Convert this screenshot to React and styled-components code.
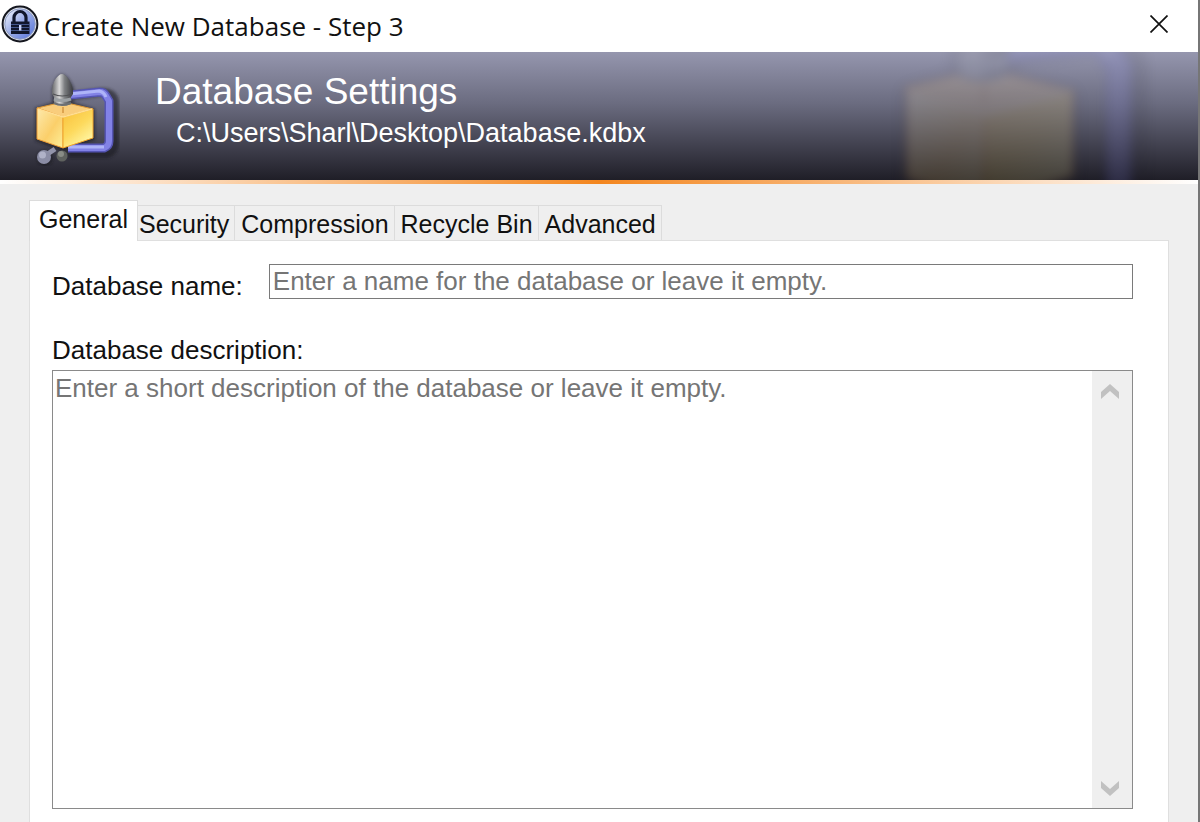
import React from "react";
import styled, { createGlobalStyle } from "styled-components";

const TABS = ["General", "Security", "Compression", "Recycle Bin", "Advanced"];

function LockIcon() {
  return (
    <svg width="38" height="38" viewBox="0 0 38 38" aria-hidden="true">
      <defs>
        <linearGradient id="lockFill" x1="0" y1="0" x2="1" y2="1">
          <stop offset="0.1" stopColor="#e4eafa" />
          <stop offset="0.45" stopColor="#9fb0e8" />
          <stop offset="0.9" stopColor="#5f7bdd" />
        </linearGradient>
      </defs>
      <circle cx="19" cy="19" r="17.4" fill="#dfe3ee" stroke="#15171f" strokeWidth="2" />
      <circle cx="19" cy="19" r="15.2" fill="url(#lockFill)" stroke="#8f9dc4" />
      <path d="M13 17v-4.500a6 6 0 0 1 12 0V17" fill="none" stroke="#10162c" strokeWidth="3.2" />
      <path d="M10 16.500h18.500v12.500H10z" fill="#10162c" />
      <path d="M10 19.500h18.500M10 22.500h18.500M10 25.500h18.500" stroke="#4a5d96" strokeWidth="0.9" />
      <path d="M18 20h2.400v5.500H18z" fill="#c5d0f5" />
    </svg>
  );
}

function ClampIcon() {
  return (
    <svg viewBox="0 0 90 96" width="100%" height="100%" aria-hidden="true">
      <defs>
        <linearGradient id="cubeLeft" x1="0" y1="0" x2="1" y2="1">
          <stop offset="0" stopColor="#fdeaae" />
          <stop offset="0.55" stopColor="#fbcf6a" />
          <stop offset="1" stopColor="#fdf09a" />
        </linearGradient>
        <linearGradient id="cubeRight" x1="0" y1="0" x2="0.6" y2="1">
          <stop offset="0" stopColor="#f8bf3a" />
          <stop offset="0.55" stopColor="#fdd95c" />
          <stop offset="1" stopColor="#fff6a4" />
        </linearGradient>
        <linearGradient id="metal" x1="0" y1="0" x2="1" y2="0">
          <stop offset="0" stopColor="#66676a" />
          <stop offset="0.35" stopColor="#d8d8d8" />
          <stop offset="0.6" stopColor="#7c7e81" />
          <stop offset="1" stopColor="#3b3c40" />
        </linearGradient>
        <filter id="shade" x="-20%" y="-20%" width="150%" height="150%">
          <feGaussianBlur stdDeviation="1.8" />
        </filter>
        <filter id="soft">
          <feGaussianBlur stdDeviation="0.7" />
        </filter>
      </defs>
      <g filter="url(#shade)" opacity="0.55">
        <path d="M42 26l30-4q11 0 13 9v44q-1 8-9 9H38" fill="none" stroke="#15151f" strokeWidth="8" />
        <path d="M5 38l28-9 32 10v31L34 82 5 71z" fill="#15151f" />
        <path d="M22 18q9-28 22 0v17H22z" fill="#15151f" />
        <circle cx="15" cy="88" r="8" fill="#15151f" />
      </g>
      <g filter="url(#soft)">
        <path d="M40 25l30-3q4 0 6 4l3 5v40q0 5-5 7H38" fill="none" stroke="#5555b4" strokeWidth="9" strokeLinejoin="round" />
        <path d="M40 25l30-3q4 0 6 4l3 5v40q0 5-5 7H38" fill="none" stroke="#8282e6" strokeWidth="6" strokeLinejoin="round" />
        <path d="M40 24l29-3q5 1 7 6M38 77h36" fill="none" stroke="#aeb4f8" strokeWidth="3" />
        <path d="M25 79l-9 6" stroke="#9294aa" strokeWidth="5" />
        <circle cx="14" cy="87" r="7" fill="#8b8da5" />
        <circle cx="12.5" cy="85" r="3.5" fill="#b0b2c8" />
        <circle cx="32" cy="86" r="5.5" fill="#5f625e" />
        <circle cx="31" cy="84" r="3" fill="#898c86" />
        <path d="M7 38l26-6 30 7-30 8z" fill="#f9cd7c" stroke="#dd9734" />
        <path d="M7 38l26 9v31L7 69z" fill="url(#cubeLeft)" stroke="#ee9c34" />
        <path d="M33 47l30-8v29L33 78z" fill="url(#cubeRight)" stroke="#efa52c" />
        <path d="M8 39l25 8 29-8" fill="none" stroke="#ffdf94" strokeWidth="1.5" />
        <path d="M33 37v6" stroke="#c27b25" />
        <path d="M22 20C22 12 28 4 32 4s10 8 11 16v4l-2 3v7q-9 4-17 0v-7l-2-3z" fill="url(#metal)" />
        <path d="M23 24q9 4 19 0" fill="none" stroke="#505154" strokeWidth="1.2" />
        <path d="M24 29q8 3 17 0" fill="none" stroke="#9ca1a5" strokeWidth="3" />
        <path d="M24 33q8 4 17 0" fill="none" stroke="#6c6f73" strokeWidth="2" />
      </g>
    </svg>
  );
}

function Arrow({ down }) {
  return (
    <svg width="18" height="15" viewBox="0 0 18 15" aria-hidden="true">
      <path
        d={down ? "M0 0l9 8 9-8v7l-9 8-9-8z" : "M0 15l9-8 9 8V8L9 0 0 8z"}
        fill="#c1c1c1"
      />
    </svg>
  );
}

function App() {
  const [tab, setTab] = React.useState("General");
  const [name, setName] = React.useState("");
  const [description, setDescription] = React.useState("");
  const descriptionRef = React.useRef(null);

  function scroll(amount) {
    descriptionRef.current.scrollBy({ top: amount });
  }

  return (
    <Window>
      <GlobalStyle />
      <TitleBar>
        <LockIcon />
        <Title>Create New Database - Step 3</Title>
        <CloseButton type="button" aria-label="Close">
          <svg width="18" height="18" viewBox="0 0 18 18" aria-hidden="true">
            <path d="M0.5 0.5l17 17M17.5 0.5l-17 17" stroke="#111" strokeWidth="1.7" />
          </svg>
        </CloseButton>
      </TitleBar>
      <Banner>
        <Watermark>
          <ClampIcon />
        </Watermark>
        <BannerIcon>
          <ClampIcon />
        </BannerIcon>
        <div>
          <Heading>Database Settings</Heading>
          <Path>C:\Users\Sharl\Desktop\Database.kdbx</Path>
        </div>
      </Banner>
      <AccentLine />
      <Content>
        <TabList role="tablist">
          {TABS.map(label => (
            <Tab
              key={label}
              type="button"
              role="tab"
              aria-selected={tab === label}
              $active={tab === label}
              onClick={() => setTab(label)}
            >
              {label}
            </Tab>
          ))}
        </TabList>
        <Panel role="tabpanel">
          <NameRow>
            <Label htmlFor="db-name">Database name:</Label>
            <NameInput
              id="db-name"
              type="text"
              value={name}
              onChange={e => setName(e.target.value)}
              placeholder="Enter a name for the database or leave it empty."
              autoComplete="off"
            />
          </NameRow>
          <Label htmlFor="db-description">Database description:</Label>
          <DescriptionBox>
            <Description
              id="db-description"
              ref={descriptionRef}
              value={description}
              onChange={e => setDescription(e.target.value)}
              placeholder="Enter a short description of the database or leave it empty."
            />
            <ScrollBar>
              <ScrollButton type="button" aria-label="Scroll up" onClick={() => scroll(-30)}>
                <Arrow />
              </ScrollButton>
              <ScrollButton type="button" aria-label="Scroll down" onClick={() => scroll(30)}>
                <Arrow down />
              </ScrollButton>
            </ScrollBar>
          </DescriptionBox>
        </Panel>
      </Content>
    </Window>
  );
}

const GlobalStyle = createGlobalStyle`
  * {
    box-sizing: border-box;
  }

  body {
    margin: 0;
    background: #efefef;
    font-family: "Liberation Sans", Arial, sans-serif;
  }

  button,
  input,
  textarea {
    font-family: inherit;
  }
`;

const Window = styled.div`
  display: flex;
  flex-direction: column;
  min-height: 100vh;
  background: #efefef;
  border-right: 2px solid #767676;
`;

const TitleBar = styled.header`
  display: flex;
  align-items: center;
  height: 52px;
  padding: 0 20px 4px 1px;
  background: #fff;
`;

const Title = styled.h1`
  flex: 1;
  margin: 0;
  padding: 4px 0 0 5px;
  color: #111;
  font-family: "Open Sans", "Segoe UI", sans-serif;
  font-size: 26px;
  font-weight: 400;
  line-height: 36px;
`;

const CloseButton = styled.button`
  display: flex;
  padding: 10px;
  background: none;
  border: 0;
`;

const Banner = styled.section`
  position: relative;
  display: flex;
  height: 128px;
  padding: 18px 30px 0;
  overflow: hidden;
  color: #fff;
  background: linear-gradient(#9596ae, #6b6c80 40%, #1f1e27);
`;

const BannerIcon = styled.div`
  width: 90px;
  height: 96px;
  margin-right: 35px;
`;

const Watermark = styled.div`
  position: absolute;
  top: -76px;
  right: 47px;
  width: 264px;
  height: 282px;
  opacity: 0.16;
  filter: blur(4px);
`;

const Heading = styled.h2`
  margin: 0;
  font-size: 37px;
  font-weight: 400;
  line-height: 44px;
`;

const Path = styled.p`
  margin: 0;
  padding-left: 21px;
  font-size: 27px;
  line-height: 38px;
`;

const AccentLine = styled.div`
  height: 4px;
  background: linear-gradient(to right, #fff, #f3861f 50%, #fff);
`;

const Content = styled.main`
  display: flex;
  flex: 1;
  flex-direction: column;
  padding: 16px 29px 0;
`;

const TabList = styled.div`
  display: flex;
  align-items: flex-end;
  height: 40px;
`;

const Tab = styled.button`
  position: relative;
  z-index: ${props => (props.$active ? 1 : 0)};
  height: ${props => (props.$active ? "41px" : "35px")};
  margin: ${props => (props.$active ? "0 -5px -1px 0" : "0")};
  padding: ${props => (props.$active ? "0 9px 4px" : "2px 5px 0 6px")};
  color: #111;
  font-size: 25px;
  line-height: 30px;
  background: ${props => (props.$active ? "#fff" : "#efefef")};
  border: 1px solid #dcdcdc;
  border-bottom: 0;
  border-left-width: ${props => (props.$active ? "1px" : "0")};
`;

const Panel = styled.div`
  display: flex;
  flex: 1;
  flex-direction: column;
  padding: 23px 35px 13px 22px;
  background: #fff;
  border: 1px solid #dfdfdf;
  border-bottom: 0;
`;

const NameRow = styled.div`
  display: flex;
  align-items: flex-end;
  gap: 26px;
  margin-bottom: 38px;
`;

const Label = styled.label`
  color: #111;
  font-size: 26px;
  line-height: 26px;
`;

const NameInput = styled.input`
  flex: 1;
  min-width: 0;
  height: 35px;
  padding: 0 3px;
  font-size: 26px;
  border: 1px solid #7a7a7a;

  &::placeholder {
    color: #757575;
    opacity: 1;
  }
`;

const DescriptionBox = styled.div`
  display: flex;
  flex: 1;
  min-height: 200px;
  margin-top: 7px;
  border: 1px solid #8a8a8a;
`;

const Description = styled.textarea`
  flex: 1;
  min-width: 0;
  padding: 2px;
  font-size: 26px;
  line-height: 30px;
  background: #fff;
  border: 0;
  outline: 0;
  resize: none;
  scrollbar-width: none;

  &::placeholder {
    color: #757575;
    opacity: 1;
  }
`;

const ScrollBar = styled.div`
  display: flex;
  flex-direction: column;
  justify-content: space-between;
  width: 40px;
  padding-right: 4px;
  background: #efefef;
`;

const ScrollButton = styled.button`
  display: flex;
  align-items: center;
  justify-content: center;
  height: 40px;
  padding: 0;
  background: none;
  border: 0;
`;

export default App;
